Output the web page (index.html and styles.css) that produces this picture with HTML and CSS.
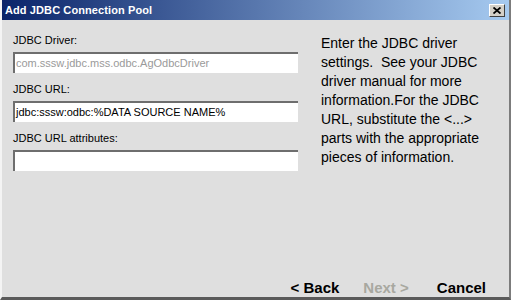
FILE: index.html
```html
<!DOCTYPE html>
<html>
<head>
  <title>Add JDBC Connection Pool</title>
  <link rel="stylesheet" href="styles.css">
</head>
<body>
  <div class="window">
    <div class="titlebar">
      <span class="title">Add JDBC Connection Pool</span>
      <button class="close">
        <svg width="8" height="7" viewBox="0 0 8 7"><path d="M0.5 0.5 L7.5 6.5 M7.5 0.5 L0.5 6.5" stroke="#000" stroke-width="1.8" fill="none"/></svg>
      </button>
    </div>

    <div class="content">
      <div class="form">
        <div class="field">
          <label>JDBC Driver:</label>
          <div class="input disabled">com.sssw.jdbc.mss.odbc.AgOdbcDriver</div>
        </div>
        <div class="field">
          <label>JDBC URL:</label>
          <div class="input">jdbc:sssw:odbc:%DATA SOURCE NAME%</div>
        </div>
        <div class="field">
          <label>JDBC URL attributes:</label>
          <div class="input"></div>
        </div>
      </div>

      <div class="help">
        Enter the JDBC driver<br>
        settings.&nbsp; See your JDBC<br>
        driver manual for more<br>
        information.For the JDBC<br>
        URL, substitute the &lt;...&gt;<br>
        parts with the appropriate<br>
        pieces of information.
      </div>
    </div>

    <div class="footer">
      <span class="nav">&lt; Back</span>
      <span class="nav off">Next &gt;</span>
      <span class="nav cancel">Cancel</span>
    </div>
  </div>
</body>
</html>
```

FILE: styles.css
```css
body {
  margin: 0;
  background: #dedede;
  font-family: "Liberation Sans", Arial, sans-serif;
}
.window {
  height: 300px;
  box-sizing: border-box;
  display: flex;
  flex-direction: column;
  background: #dfdfdf;
  border-left: 2px solid #f4f4f4;
  border-right: 2px solid #7c7c7c;
  border-bottom: 3px solid #5a5a5a;
}
.titlebar {
  height: 20px;
  display: flex;
  align-items: center;
  justify-content: space-between;
  padding: 0 4px 0 3px;
  background: linear-gradient(to right, #0a246a, #a6caf0);
}
.title {
  color: #fff;
  font-weight: bold;
  font-size: 11px;
  letter-spacing: 0.1px;
}
.close {
  width: 16px;
  height: 13px;
  padding: 0;
  margin-top: 1px;
  display: flex;
  align-items: center;
  justify-content: center;
  background: #d4d0c8;
  border: 1px solid;
  border-color: #fff #404040 #404040 #fff;
}
.content {
  display: flex;
  padding-top: 14px;
}
.form {
  width: 285px;
  padding-left: 11px;
}
.field {
  margin-bottom: 10px;
}
.field label {
  display: block;
  font-size: 11px;
  line-height: 13px;
  color: #000;
  margin-bottom: 5px;
}
.input {
  height: 21px;
  box-sizing: border-box;
  background: #fff;
  border-top: 2px solid #6e6e6e;
  border-left: 2px solid #6e6e6e;
  padding-left: 1px;
  font-size: 11px;
  line-height: 19px;
  color: #000;
  white-space: nowrap;
}
.input.disabled {
  color: #9a9a9a;
}
.help {
  margin-left: 23px;
  font-size: 14px;
  line-height: 19px;
  color: #000;
}
.footer {
  margin-top: auto;
  display: flex;
  justify-content: flex-end;
  gap: 22px;
  padding-right: 22px;
  font-size: 15px;
  font-weight: bold;
  line-height: 18px;
}
.nav {
  padding: 0 1px;
}
.nav.off {
  color: #a8a8a0;
}
.nav.cancel {
  margin-left: 4px;
}
```
